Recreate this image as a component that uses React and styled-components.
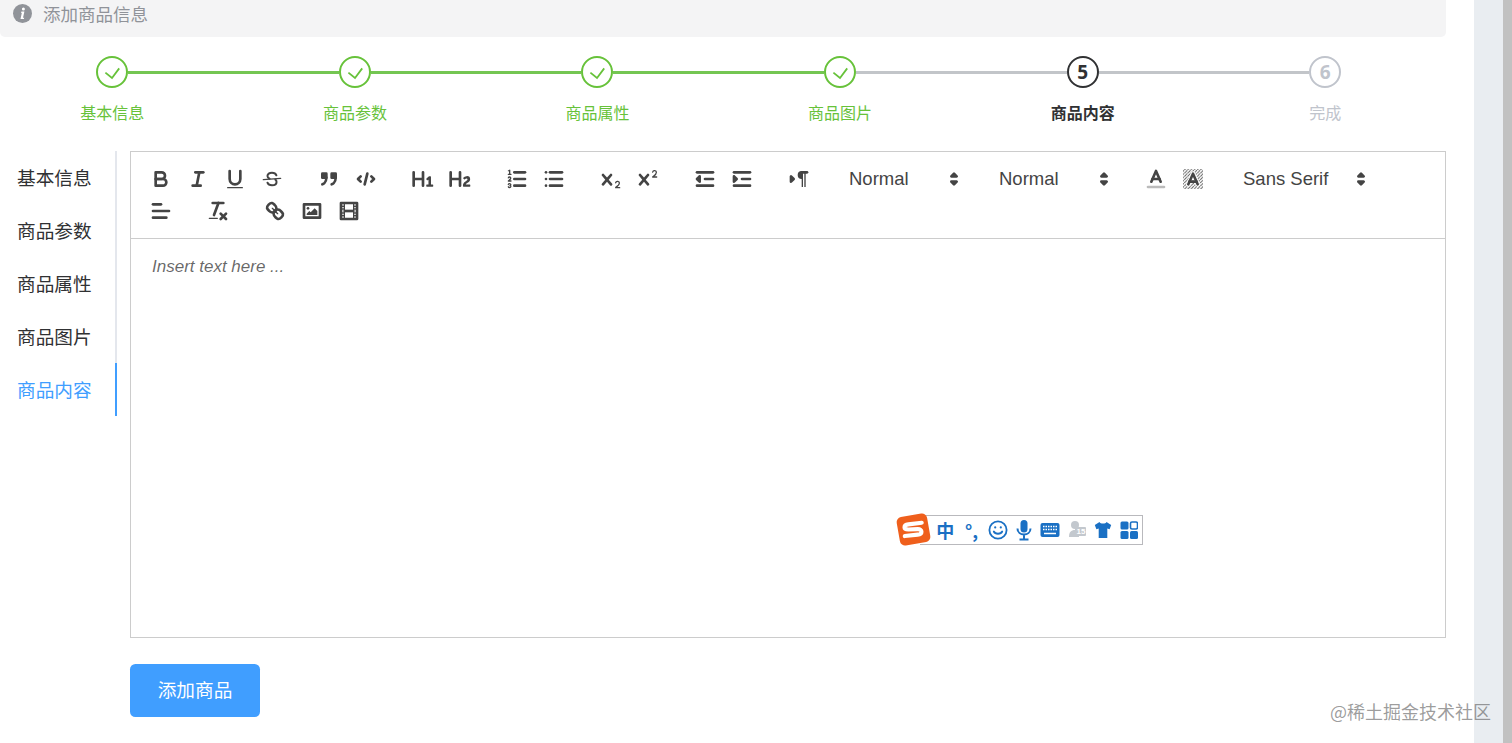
import React from 'react';
import styled, { createGlobalStyle } from 'styled-components';

const GlobalStyle = createGlobalStyle`
  html, body {
    margin: 0;
    height: 100%;
    overflow: hidden;
    background: #e9edf1;
    font-family: "Noto Sans CJK SC", "Liberation Sans", sans-serif;
  }
`;

const Shell = styled.div`
  display: flex;
  height: 743px;
  position: relative;
`;
const Page = styled.main`
  width: 1474px;
  flex: none;
  background: #fff;
  position: relative;
`;
const Gutter = styled.div`
  flex: 1;
  background: #e9edf1;
`;
const ScrollBar = styled.div`
  width: 9px;
  flex: none;
  background: #c1c1c1;
`;

const Alert = styled.div`
  width: 1446px;
  height: 37px;
  box-sizing: border-box;
  padding: 0 0 11px 13px;
  display: flex;
  align-items: center;
  gap: 11px;
  background: #f4f4f5;
  border-radius: 0 0 5px 5px;
  color: #909399;
  font-size: 17.5px;
`;

const Steps = styled.div`
  display: flex;
  margin: 19px 0 0 -9px;
  height: 95px;
`;
const Step = styled.div`
  flex: 0 0 242.6px;
  display: flex;
  flex-direction: column;
  align-items: center;
`;
const StepHead = styled.div`
  width: 100%;
  height: 32px;
  display: flex;
  align-items: center;
`;
const Line = styled.div`
  flex: 1;
  height: 3px;
  background: ${p => (p.$hidden ? 'transparent' : p.$done ? '#74c652' : '#c2c5c9')};
`;
const stepColor = { done: '#67c23a', current: '#303133', wait: '#c0c4cc' };
const Circle = styled.div`
  width: 32px;
  height: 32px;
  flex: none;
  box-sizing: border-box;
  border: 2.2px solid ${p => stepColor[p.$status]};
  border-radius: 50%;
  display: flex;
  align-items: center;
  justify-content: center;
  color: ${p => stepColor[p.$status]};
  font: 700 19px "Open Sans", sans-serif;
`;
const StepLabel = styled.div`
  margin-top: 12px;
  font-size: 16px;
  line-height: 24px;
  font-weight: ${p => (p.$status === 'current' ? 700 : 400)};
  color: ${p => stepColor[p.$status]};
`;

const Body = styled.div`
  display: flex;
  align-items: flex-start;
  width: 1446px;
`;
const TabList = styled.nav`
  width: 117px;
  flex: none;
  border-right: 2px solid #e4e7ed;
  box-sizing: border-box;
`;
const Tab = styled.div`
  height: 53px;
  line-height: 51px;
  padding-left: 17px;
  margin-right: -2px;
  font-size: 18.67px;
  color: ${p => (p.$active ? '#409eff' : '#303133')};
  border-right: 2px solid ${p => (p.$active ? '#409eff' : 'transparent')};
`;
const Form = styled.div`
  flex: 1;
  margin-left: 13px;
`;
const Editor = styled.div`
  height: 487px;
  box-sizing: border-box;
  border: 1px solid #ccc;
  display: flex;
  flex-direction: column;
`;
const Toolbar = styled.div`
  padding: 10.67px 10.5px 11.33px 11px;
  border-bottom: 1px solid #ccc;
  font-family: "Liberation Sans", Arial, sans-serif;
`;
const ToolRow = styled.div`
  display: flex;
  height: 32px;
`;
const Group = styled.div`
  display: flex;
  margin-right: 20px;
`;
const ToolButton = styled.div`
  width: 37px;
  height: 32px;
  display: flex;
  align-items: center;
  justify-content: center;
`;
const Icon = styled.svg.attrs({ viewBox: '0 0 18 18' })`
  width: 24px;
  height: 24px;
  flex: none;
  fill: none;
  stroke: #444;
  stroke-width: 2;
  stroke-linecap: round;
  stroke-linejoin: round;
`;
const Picker = styled.div`
  width: ${p => p.$width}px;
  height: 32px;
  box-sizing: border-box;
  padding: 0 1.5px 0 12px;
  display: flex;
  align-items: center;
  justify-content: space-between;
  font-size: 18.5px;
  color: #444;
`;
const EditArea = styled.div`
  padding: 16.5px 21px;
  font: italic 17px/24.6px "Liberation Sans", Arial, sans-serif;
  color: rgba(0, 0, 0, 0.6);
`;
const SubmitButton = styled.button`
  display: block;
  width: 130px;
  height: 53px;
  margin-top: 26px;
  padding: 0 0 4px;
  border: none;
  border-radius: 5.33px;
  background: #409eff;
  color: #fff;
  font: 400 18.67px "Noto Sans CJK SC", sans-serif;
`;

const ImeBar = styled.div`
  position: absolute;
  left: 920px;
  top: 515px;
  width: 223px;
  height: 30px;
  box-sizing: border-box;
  padding-left: 12px;
  display: flex;
  align-items: center;
  background: #fff;
  border: 1px solid #b9b9bd;
  border-left: none;
  color: #1a70c4;
`;
const ImeLogo = styled.svg`
  position: absolute;
  left: -25px;
  top: -5px;
  width: 37px;
  height: 37px;
`;
const ImeCell = styled.div`
  width: 26.3px;
  flex: none;
  display: flex;
  align-items: center;
  justify-content: center;
  font: 700 18px "Noto Sans CJK SC", sans-serif;
  position: relative;
`;
const ImeBadge = styled.span`
  position: absolute;
  left: 12px;
  top: 7px;
  padding: 0 1px;
  background: #c3c8ce;
  color: #fff;
  font: 700 8px/9px "Liberation Sans", sans-serif;
  border-radius: 1px;
`;
const Watermark = styled.div`
  position: absolute;
  left: 1330px;
  top: 697px;
  font-size: 18px;
  line-height: 28px;
  color: rgba(90, 90, 90, 0.6);
  white-space: nowrap;
`;

const f = { fill: '#444', stroke: 'none' };
const thin = { strokeWidth: 1 };
const solid = { style: { fill: '#444' } };

const icons = {
  bold: <><path d="M5,4H9.5A2.5,2.5,0,0,1,12,6.5v0A2.5,2.5,0,0,1,9.5,9H5V4Z" /><path d="M5,9h5.5A2.5,2.5,0,0,1,13,11.5v0A2.5,2.5,0,0,1,10.5,14H5V9Z" /></>,
  italic: <><line x1="7" x2="13" y1="4" y2="4" /><line x1="5" x2="11" y1="14" y2="14" /><line x1="8" x2="10" y1="14" y2="4" /></>,
  underline: <><path d="M5,3V9a4.012,4.012,0,0,0,4,4H9a4.012,4.012,0,0,0,4-4V3" /><rect {...f} height="1" rx=".5" ry=".5" width="12" x="3" y="15" /></>,
  strike: <><line {...thin} x1="15.5" x2="2.5" y1="8.5" y2="9.5" /><path strokeWidth="1.5" d="M12.3,6.2C11.8,4.9,10.6,4.3,9,4.3c-2,0-3.4,1-3.4,2.5,0,1,.6,1.6,1.6,2" /><path strokeWidth="1.5" d="M5.6,11.8c.5,1.3,1.8,1.9,3.4,1.9,2,0,3.4-1,3.4-2.5,0-.8-.3-1.3-.9-1.7" /></>,
  quote: <><rect {...solid} height="3" width="3" x="4" y="5" /><rect {...solid} height="3" width="3" x="11" y="5" /><path d="M7,8c0,4.031-3,5-3,5" /><path d="M14,8c0,4.031-3,5-3,5" /></>,
  code: <><polyline points="5 7 3 9 5 11" /><polyline points="13 7 15 9 13 11" /><line x1="10" x2="8" y1="5" y2="13" /></>,
  h1: <path {...f} d="M10,4V14a1,1,0,0,1-2,0V10H3v4a1,1,0,0,1-2,0V4A1,1,0,0,1,3,4V8H8V4a1,1,0,0,1,2,0Zm6.06787,9.209H14.98975V7.59863a.54085.54085,0,0,0-.605-.60547h-.62744a1.01119,1.01119,0,0,0-.748.29688L11.645,8.56641a.5435.5435,0,0,0-.022.8584l.28613.30762a.53861.53861,0,0,0,.84717.0332l.09912-.08789a1.2137,1.2137,0,0,0,.2417-.35254h.02246s-.01123.30859-.01123.60547V13.209H12.041a.54085.54085,0,0,0-.605.60547v.43945a.54085.54085,0,0,0,.605.60547h4.02686a.54085.54085,0,0,0,.605-.60547v-.43945A.54085.54085,0,0,0,16.06787,13.209Z" />,
  h2: <path {...f} d="M16.73975,13.81445v.43945a.54085.54085,0,0,1-.605.60547H11.855a.58392.58392,0,0,1-.64893-.60547V14.0127c0-2.90527,3.39941-3.42187,3.39941-4.55469a.77675.77675,0,0,0-.84717-.78125,1.17684,1.17684,0,0,0-.83594.38477c-.2749.26367-.561.374-.85791.13184l-.4292-.34082c-.30811-.24219-.38525-.51758-.1543-.81445a2.97155,2.97155,0,0,1,2.45361-1.17676,2.45393,2.45393,0,0,1,2.68408,2.40918c0,2.45312-3.1792,2.92676-3.27832,3.93848h2.79443A.54085.54085,0,0,1,16.73975,13.81445ZM9,3A.99974.99974,0,0,0,8,4V8H3V4A1,1,0,0,0,1,4V14a1,1,0,0,0,2,0V10H8v4a1,1,0,0,0,2,0V4A.99974.99974,0,0,0,9,3Z" />,
  ol: <><line x1="7" x2="15" y1="4" y2="4" /><line x1="7" x2="15" y1="9" y2="9" /><line x1="7" x2="15" y1="14" y2="14" /><line {...thin} x1="2.5" x2="4.5" y1="5.5" y2="5.5" /><path {...f} d="M3.5,6A0.5,0.5,0,0,1,3,5.5V3.085l-0.276.138A0.5,0.5,0,0,1,2.053,3c-0.124-.247-0.023-0.324.224-0.447l1-.5A0.5,0.5,0,0,1,4,2.5v3A0.5,0.5,0,0,1,3.5,6Z" /><path {...thin} d="M4.5,10.5h-2c0-.234,1.85-1.076,1.85-2.234A0.959,0.959,0,0,0,2.5,8.156" /><path {...thin} d="M2.5,14.846a0.959,0.959,0,0,0,1.85-.109A0.7,0.7,0,0,0,3.75,14a0.688,0.688,0,0,0,.6-0.736,0.959,0.959,0,0,0-1.85-.109" /></>,
  ul: <><line x1="6" x2="15" y1="4" y2="4" /><line x1="6" x2="15" y1="9" y2="9" /><line x1="6" x2="15" y1="14" y2="14" /><line x1="3" x2="3" y1="4" y2="4" /><line x1="3" x2="3" y1="9" y2="9" /><line x1="3" x2="3" y1="14" y2="14" /></>,
  sub: <><path {...f} d="M15.5,15H13.861a3.858,3.858,0,0,0,1.914-2.975,1.8,1.8,0,0,0-1.6-1.751A1.921,1.921,0,0,0,12.021,11.7a0.50013,0.50013,0,1,0,.957.291h0a0.914,0.914,0,0,1,1.053-.725,0.81,0.81,0,0,1,.744.762c0,1.076-1.16971,1.86982-1.93971,2.43082A1.45639,1.45639,0,0,0,12,15.5a0.5,0.5,0,0,0,.5.5h3A0.5,0.5,0,0,0,15.5,15Z" /><path {...f} d="M9.65,5.241a1,1,0,0,0-1.409.108L6,7.964,3.759,5.349A1,1,0,0,0,2.192,6.59178Q2.21541,6.6213,2.241,6.649L4.684,9.5,2.241,12.35A1,1,0,0,0,3.71,13.70722q0.02557-.02768.049-0.05722L6,11.036,8.241,13.65a1,1,0,1,0,1.567-1.24277Q9.78459,12.3777,9.759,12.35L7.316,9.5,9.759,6.651A1,1,0,0,0,9.65,5.241Z" /></>,
  sup: <><path {...f} d="M15.5,7H13.861a4.015,4.015,0,0,0,1.914-2.975,1.8,1.8,0,0,0-1.6-1.751A1.922,1.922,0,0,0,12.021,3.7a0.5,0.5,0,1,0,.957.291,0.917,0.917,0,0,1,1.053-.725,0.81,0.81,0,0,1,.744.762c0,1.077-1.164,1.925-1.934,2.486A1.423,1.423,0,0,0,12,7.5a0.5,0.5,0,0,0,.5.5h3A0.5,0.5,0,0,0,15.5,7Z" /><path {...f} d="M9.651,5.241a1,1,0,0,0-1.41.108L6,7.964,3.759,5.349a1,1,0,1,0-1.519,1.3L4.683,9.5,2.241,12.35a1,1,0,1,0,1.519,1.3L6,11.036,8.241,13.65a1,1,0,0,0,1.519-1.3L7.317,9.5,9.759,6.651A1,1,0,0,0,9.651,5.241Z" /></>,
  outdent: <><line x1="3" x2="15" y1="14" y2="14" /><line x1="3" x2="15" y1="4" y2="4" /><line x1="9" x2="15" y1="9" y2="9" /><polyline {...solid} points="5 7 5 11 3 9 5 7" /></>,
  indent: <><line x1="3" x2="15" y1="14" y2="14" /><line x1="3" x2="15" y1="4" y2="4" /><line x1="9" x2="15" y1="9" y2="9" /><polyline {...solid} points="3 7 3 11 5 9 3 7" /></>,
  direction: <><polygon {...solid} points="3 11 5 9 3 7 3 11" /><line x1="15" x2="11" y1="4" y2="4" /><path {...f} d="M11,3a3,3,0,0,0,0,6h1V3H11Z" /><rect {...f} height="11" width="1" x="11" y="4" /><rect {...f} height="11" width="1" x="13" y="4" /></>,
  color: <><line style={{ stroke: '#bbb' }} x1="3" x2="15" y1="15" y2="15" /><polyline points="5.5 11 9 3 12.5 11" /><line x1="11.63" x2="6.38" y1="9" y2="9" /></>,
  background: <>
    <defs>
      <pattern id="hatch" width="2.4" height="2.4" patternUnits="userSpaceOnUse">
        <path d="M0,2.4L2.4,0" stroke="#555" strokeWidth=".7" strokeLinecap="butt" />
      </pattern>
    </defs>
    <rect x="1.5" y="1.5" width="15" height="15" fill="url(#hatch)" stroke="none" />
    <polyline style={{ stroke: '#fff', strokeWidth: 3.4 }} points="5.5 13 9 5 12.5 13" />
    <polyline points="5.5 13 9 5 12.5 13" />
    <line x1="11.63" x2="6.38" y1="11" y2="11" />
  </>,
  align: <><line x1="3" x2="15" y1="9" y2="9" /><line x1="3" x2="13" y1="14" y2="14" /><line x1="3" x2="9" y1="4" y2="4" /></>,
  clean: <><line x1="5" x2="13" y1="3" y2="3" /><line x1="6" x2="9.35" y1="12" y2="3" /><line x1="11" x2="15" y1="11" y2="15" /><line x1="15" x2="11" y1="11" y2="15" /><rect {...f} height="1" rx=".5" ry=".5" width="7" x="2" y="14" /></>,
  link: <><line {...thin} x1="7" x2="11" y1="7" y2="11" /><path d="M8.9,4.577a3.476,3.476,0,0,1,.36,4.679A3.476,3.476,0,0,1,4.577,8.9C3.185,7.5,2.035,6.4,4.217,4.217S7.5,3.185,8.9,4.577Z" /><path d="M13.423,9.1a3.476,3.476,0,0,0-4.679-.36,3.476,3.476,0,0,0,.36,4.679c1.392,1.392,2.5,2.542,4.679.36S14.815,10.5,13.423,9.1Z" /></>,
  image: <><rect height="10" width="12" x="3" y="4" /><circle {...f} cx="6" cy="7" r="1" /><polyline {...f} points="5 12 5 11 7 9 8 10 11 7 13 9 13 12 5 12" /></>,
  video: <><rect height="12" width="12" x="3" y="3" /><rect {...f} height="12" width="1" x="5" y="3" /><rect {...f} height="12" width="1" x="12" y="3" /><rect {...f} height="2" width="8" x="5" y="8" /><rect {...f} height="1" width="3" x="3" y="5" /><rect {...f} height="1" width="3" x="3" y="7" /><rect {...f} height="1" width="3" x="3" y="10" /><rect {...f} height="1" width="3" x="3" y="12" /><rect {...f} height="1" width="3" x="12" y="5" /><rect {...f} height="1" width="3" x="12" y="7" /><rect {...f} height="1" width="3" x="12" y="10" /><rect {...f} height="1" width="3" x="12" y="12" /></>,
};

const toolRows = [
  [
    ['bold', 'italic', 'underline', 'strike'],
    ['quote', 'code'],
    ['h1', 'h2'],
    ['ol', 'ul'],
    ['sub', 'sup'],
    ['outdent', 'indent'],
    ['direction'],
    { label: 'Normal', width: 130 },
    { label: 'Normal', width: 130 },
    ['color', 'background'],
    { label: 'Sans Serif', width: 143 },
  ],
  [['align'], ['clean'], ['link', 'image', 'video']],
];

const steps = [
  { label: '基本信息', status: 'done' },
  { label: '商品参数', status: 'done' },
  { label: '商品属性', status: 'done' },
  { label: '商品图片', status: 'done' },
  { label: '商品内容', status: 'current', number: 5 },
  { label: '完成', status: 'wait', number: 6 },
];

const tabs = ['基本信息', '商品参数', '商品属性', '商品图片', '商品内容'];

const renderTool = (item, i) => {
  if (item.label) {
    return (
      <Group key={i}>
        <Picker $width={item.width}>
          {item.label}
          <Icon>
            <polygon {...solid} points="7 11 9 13 11 11 7 11" />
            <polygon {...solid} points="7 7 9 5 11 7 7 7" />
          </Icon>
        </Picker>
      </Group>
    );
  }
  return (
    <Group key={i}>
      {item.map(name => (
        <ToolButton key={name}>
          <Icon>{icons[name]}</Icon>
        </ToolButton>
      ))}
    </Group>
  );
};

const SogouBar = () => (
  <ImeBar>
    <ImeLogo viewBox="0 0 36 36">
      <rect x="3" y="4" width="30" height="28" rx="5" fill="#ef5f1c" transform="rotate(-10 18 18)" />
      <path d="M26 11.5 L13 13 C8 13.6 8 18 13 18 L22 17.6 C27 17.4 27 22.6 22 23 L9.5 24.4" fill="none" stroke="#fff" strokeWidth="4" strokeLinecap="round" />
    </ImeLogo>
    <ImeCell>中</ImeCell>
    <ImeCell>°,</ImeCell>
    <ImeCell>
      <svg width="20" height="20" viewBox="0 0 20 20" fill="none" stroke="currentColor" strokeWidth="1.8">
        <circle cx="10" cy="10" r="8.6" />
        <path d="M5.8 11.5c1.4 3 7 3 8.4 0" strokeLinecap="round" />
        <circle cx="7.2" cy="7.4" r="1.1" fill="currentColor" stroke="none" />
        <circle cx="12.8" cy="7.4" r="1.1" fill="currentColor" stroke="none" />
      </svg>
    </ImeCell>
    <ImeCell>
      <svg width="20" height="22" viewBox="0 0 20 22" fill="none" stroke="currentColor" strokeWidth="2">
        <rect x="6.5" y="1" width="7" height="12.5" rx="3.5" fill="currentColor" stroke="none" />
        <path d="M3.5 9.5c0 8 13 8 13 0M10 16v4M5.5 20.5h9" />
      </svg>
    </ImeCell>
    <ImeCell>
      <svg width="20" height="16" viewBox="0 0 20 16">
        <rect x="0.5" y="1" width="19" height="14" rx="2" fill="currentColor" />
        <path d="M3 4.5h14M3 7.5h14" stroke="#fff" strokeWidth="1.5" strokeDasharray="1.5 1" />
        <path d="M4 11.5h12" stroke="#fff" strokeWidth="1.5" />
      </svg>
    </ImeCell>
    <ImeCell>
      <svg width="20" height="20" viewBox="0 0 20 20" fill="#c3c8ce">
        <circle cx="8" cy="5" r="4" />
        <path d="M2 17c0-5 2-7 6-7s4 2 4 7z" />
      </svg>
      <ImeBadge>15</ImeBadge>
    </ImeCell>
    <ImeCell>
      <svg width="18" height="18" viewBox="0 0 18 18" fill="currentColor">
        <path d="M5.5 1L0.8 4l1.6 4.2 2.3-.8V17h8.6V7.4l2.3.8L17.2 4l-4.7-3C11.8 3 6.2 3 5.5 1z" />
      </svg>
    </ImeCell>
    <ImeCell>
      <svg width="18" height="18" viewBox="0 0 18 18" fill="currentColor">
        <rect x="0.5" y="0.5" width="8" height="8" rx="1.5" />
        <rect x="10.5" y="1" width="7" height="7" rx="1.5" fill="none" stroke="currentColor" strokeWidth="1.6" />
        <rect x="0.5" y="10" width="8" height="8" rx="1.5" />
        <rect x="10" y="10" width="8" height="8" rx="1.5" />
      </svg>
    </ImeCell>
  </ImeBar>
);

export default function App() {
  return (
    <>
      <GlobalStyle />
      <Shell>
        <Page>
          <Alert>
            <svg width="19" height="19" viewBox="0 0 19 19">
              <circle cx="9.5" cy="9.5" r="9.5" fill="#909399" />
              <path d="M8.4 7.6h3l-1.4 6.2h1.2l-.3 1.3H7.5l1.3-6.2H8.1zM10.4 3.4a1.5 1.5 0 1 1 0 3 1.5 1.5 0 0 1 0-3z" fill="#fff" />
            </svg>
            添加商品信息
          </Alert>
          <Steps>
            {steps.map((s, i) => (
              <Step key={s.label}>
                <StepHead>
                  <Line $hidden={i === 0} $done={s.status === 'done'} />
                  <Circle $status={s.status}>
                    {s.number || (
                      <svg width="20" height="20" viewBox="0 0 20 20" fill="none" stroke="#67c23a" strokeWidth="1.8">
                        <path d="M3.4 10.6l6.6 5.4 7.2-9.6" />
                      </svg>
                    )}
                  </Circle>
                  <Line $hidden={i === steps.length - 1} $done={i < 3} />
                </StepHead>
                <StepLabel $status={s.status}>{s.label}</StepLabel>
              </Step>
            ))}
          </Steps>
          <Body>
            <TabList>
              {tabs.map((t, i) => (
                <Tab key={t} $active={i === 4}>{t}</Tab>
              ))}
            </TabList>
            <Form>
              <Editor>
                <Toolbar>
                  {toolRows.map((row, i) => (
                    <ToolRow key={i}>{row.map(renderTool)}</ToolRow>
                  ))}
                </Toolbar>
                <EditArea>Insert text here ...</EditArea>
              </Editor>
              <SubmitButton>添加商品</SubmitButton>
            </Form>
          </Body>
          <SogouBar />
        </Page>
        <Gutter />
        <ScrollBar />
        <Watermark>@稀土掘金技术社区</Watermark>
      </Shell>
    </>
  );
}
